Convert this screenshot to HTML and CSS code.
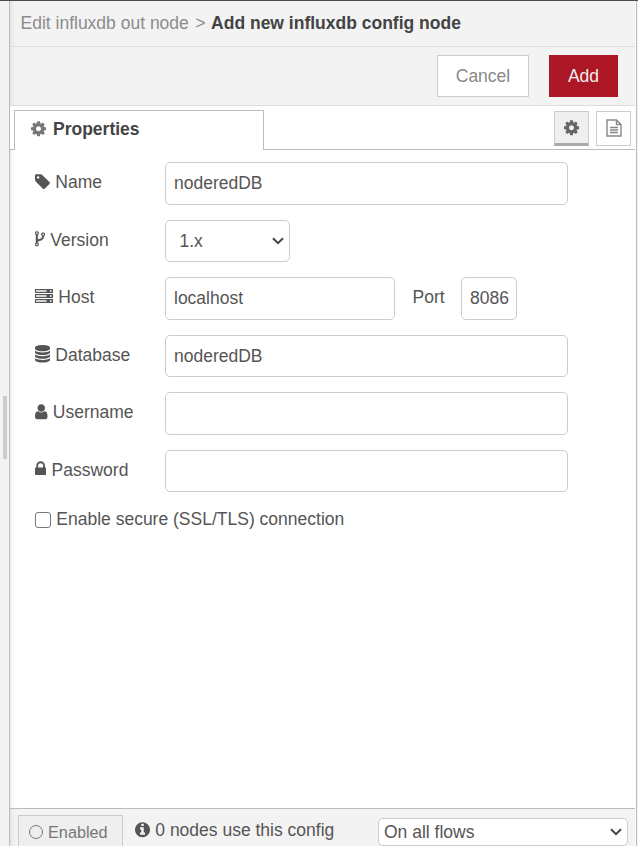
FILE: index.html
```html
<!DOCTYPE html>
<html lang="en">
<head>
<meta charset="utf-8">
<title>Add new influxdb config node</title>
<link rel="stylesheet" href="styles.css">
</head>
<body>
<div class="workspace">
  <div class="separator"><span class="grip"></span></div>
  <main class="tray">
    <header class="breadcrumb"><span>Edit influxdb out node</span><span class="crumb-arrow">&gt;</span><strong>Add new influxdb config node</strong></header>
    <div class="toolbar">
      <button class="button">Cancel</button>
      <button class="button primary">Add</button>
    </div>
    <nav class="tabs">
      <div class="tab">
        <svg class="icon" viewBox="128 0 1536 1792"><path id="cog" d="M1152 896q0-106-75-181t-181-75-181 75-75 181 75 181 181 75 181-75 75-181zm512-109v222q0 12-8 23t-20 13l-185 28q-19 54-39 91 35 50 107 138 10 12 10 25t-9 23q-27 37-99 108t-94 71q-12 0-26-9l-138-108q-44 23-91 38-16 136-29 186-7 28-36 28h-222q-14 0-24.500-8.500t-11.500-21.500l-28-184q-49-16-90-37l-141 107q-10 9-25 9-14 0-25-11-126-114-165-168-7-10-7-23 0-12 8-23 15-21 51-66.500t54-70.500q-27-50-41-99l-183-27q-13-2-21-12.500t-8-23.500v-222q0-12 8-23t19-13l186-28q14-46 39-92-40-57-107-138-10-12-10-24 0-10 9-23 26-36 98.500-107.500t94.500-71.500q13 0 26 10l138 107q44-23 91-38 16-136 29-186 7-28 36-28h222q14 0 24.500 8.500t11.500 21.500l28 184q49 16 90 37l142-107q9-9 24-9 13 0 25 10 129 119 165 170 7 8 7 22 0 12-8 23-15 21-51 66.500t-54 70.500q26 50 41 98l183 28q13 2 21 12.500t8 23.500z"/></svg>
        <span>Properties</span>
      </div>
      <div class="tab-rest">
        <button class="tool active"><svg class="icon" viewBox="128 0 1536 1792"><use href="#cog"/></svg></button>
        <button class="tool"><svg class="icon doc" viewBox="0 0 16 18"><path d="M1 1h9.500L15 5.500V17H1zM10.500 1v4.500H15M4 8.500h8M4 11h8M4 13.500h8"/></svg></button>
      </div>
    </nav>
    <form class="form">
      <div class="row">
        <label><svg class="icon" viewBox="128 0 1536 1792"><path d="M576 448q0-53-37.500-90.500t-90.500-37.500-90.500 37.500-37.500 90.500 37.500 90.500 90.500 37.500 90.500-37.500 37.500-90.500zm1067 576q0 53-37 90l-491 492q-39 37-91 37-53 0-90-37l-715-716q-38-37-64.500-101t-26.500-117v-416q0-52 38-90t90-38h416q53 0 117 26.500t102 64.500l715 714q37 39 37 91z"/></svg><span>Name</span></label>
        <div class="field">noderedDB</div>
      </div>
      <div class="row">
        <label><svg class="icon fork" viewBox="384 0 1024 1792"><path d="M672 1472q0-40-28-68t-68-28-68 28-28 68 28 68 68 28 68-28 28-68zm0-1152q0-40-28-68t-68-28-68 28-28 68 28 68 68 28 68-28 28-68zm640 128q0-40-28-68t-68-28-68 28-28 68 28 68 68 28 68-28 28-68zm96 0q0 52-26 96.500t-70 69.500q-2 287-226 414-67 38-203 81-128 40-169.500 71t-41.500 100v26q44 25 70 69.500t26 96.500q0 80-56 136t-136 56-136-56-56-136q0-52 26-96.500t70-69.500v-820q-44-25-70-69.500t-26-96.500q0-80 56-136t136-56 136 56 56 136q0 52-26 96.500t-70 69.500v497q54-26 154-57 55-17 87.500-29.500t70.500-31 59-39.500 40.500-51 28-69.500 8.500-91.500q-44-25-70-69.500t-26-96.500q0-80 56-136t136-56 136 56 56 136z"/></svg><span>Version</span></label>
        <div class="field select version"><span>1.x</span><svg class="chevron" viewBox="0 0 12 8"><path d="M1 1.200l5 5 5-5"/></svg></div>
      </div>
      <div class="row">
        <label><svg class="icon server" viewBox="0 0 18 18"><path fill-rule="evenodd" d="M0 1h18v4H0zM1 2.200v1.600h10.500V2.200zM15 2.300h1.600v1.400H15zM0 6h18v4H0zM1 7.200v1.600h10.500V7.200zM15 7.300h1.600v1.400H15zM0 11h18v4H0zM1 12.200v1.600h10.500v-1.600zM15 12.300h1.600v1.400H15z"/></svg><span>Host</span></label>
        <div class="field host">localhost</div>
        <span class="port-label">Port</span>
        <div class="field port">8086</div>
      </div>
      <div class="row">
        <label><svg class="icon" viewBox="128 0 1536 1792"><path d="M896 768q237 0 443-43t325-127v170q0 69-103 128t-280 93.500-385 34.500-385-34.500-280-93.500-103-128v-170q119 84 325 127t443 43zm0 768q237 0 443-43t325-127v170q0 69-103 128t-280 93.500-385 34.500-385-34.500-280-93.500-103-128v-170q119 84 325 127t443 43zm0-384q237 0 443-43t325-127v170q0 69-103 128t-280 93.500-385 34.500-385-34.500-280-93.500-103-128v-170q119 84 325 127t443 43zm0-1152q208 0 385 34.500t280 93.500 103 128v128q0 69-103 128t-280 93.500-385 34.500-385-34.500-280-93.500-103-128v-128q0-69 103-128t280-93.500 385-34.500z"/></svg><span>Database</span></label>
        <div class="field">noderedDB</div>
      </div>
      <div class="row">
        <label><svg class="icon user" viewBox="256 0 1280 1792"><path d="M1536 1399q0 109-62.500 187t-150.500 78h-854q-88 0-150.500-78t-62.500-187q0-85 8.500-160.500t31.500-152 58.500-131 94-89 134.500-34.500q131 128 313 128t313-128q76 0 134.500 34.500t94 89 58.500 131 31.500 152 8.500 160.500zm-256-887q0 159-112.500 271.500t-271.500 112.500-271.500-112.500-112.500-271.500 112.500-271.500 271.500-112.500 271.500 112.500 112.500 271.500z"/></svg><span>Username</span></label>
        <div class="field"></div>
      </div>
      <div class="row">
        <label><svg class="icon lock" viewBox="320 0 1152 1792"><path d="M640 768h512v-192q0-106-75-181t-181-75-181 75-75 181v192zm832 96v576q0 40-28 68t-68 28h-960q-40 0-68-28t-28-68v-576q0-40 28-68t68-28h32v-192q0-184 132-316t316-132 316 132 132 316v192h32q40 0 68 28t28 68z"/></svg><span>Password</span></label>
        <div class="field"></div>
      </div>
      <div class="check-row"><span class="checkbox"></span><span>Enable secure (SSL/TLS) connection</span></div>
    </form>
    <footer class="footer">
      <button class="enabled"><span class="ring"></span><span>Enabled</span></button>
      <div class="usage"><svg class="icon" viewBox="128 0 1536 1792"><path d="M1152 1376v-160q0-14-9-23t-23-9h-96v-512q0-14-9-23t-23-9h-320q-14 0-23 9t-9 23v160q0 14 9 23t23 9h96v320h-96q-14 0-23 9t-9 23v160q0 14 9 23t23 9h448q14 0 23-9t9-23zm-128-896v-160q0-14-9-23t-23-9h-192q-14 0-23 9t-9 23v160q0 14 9 23t23 9h192q14 0 23-9t9-23zm640 416q0 209-103 385.500t-279.500 279.500-385.500 103-385.500-103-279.500-279.500-103-385.500 103-385.500 279.500-279.500 385.500-103 385.500 103 279.500 279.500 103 385.500z"/></svg><span>0 nodes use this config</span></div>
      <div class="field select scope"><span>On all flows</span><svg class="chevron" viewBox="0 0 12 8"><path d="M1 1.200l5 5 5-5"/></svg></div>
    </footer>
  </main>
</div>
</body>
</html>
```
FILE: styles.css
```css
* { box-sizing: border-box; }

body {
  margin: 0;
  height: 846px;
  overflow: hidden;
  background: #f3f3f3;
  color: #555;
  font: 17.5px/25px "Liberation Sans", Arial, sans-serif;
}

button { font: inherit; margin: 0; }

.workspace {
  display: flex;
  height: 846px;
  border-top: 1px solid #4c4a4d;
}

.separator {
  display: flex;
  flex: none;
  align-items: center;
  width: 9px;
  padding-left: 3px;
}

.grip {
  width: 4px;
  height: 63px;
  margin-top: 8px;
  background: #ccc;
}

.tray {
  display: flex;
  flex-direction: column;
  width: 628px;
  background: #fff;
  border: solid #bbb;
  border-width: 0 1px;
  padding-right: 1px;
}

.breadcrumb {
  flex: none;
  height: 46px;
  padding: 10px 10px 0 10.5px;
  background: #f3f3f3;
  border-bottom: 1px solid #ddd;
  color: #8c8c8c;
  white-space: nowrap;
}

.crumb-arrow { margin: 0 5.5px 0 6.5px; }
.breadcrumb strong { color: #444; }

.toolbar {
  display: flex;
  flex: none;
  justify-content: flex-end;
  gap: 20px;
  height: 59px;
  padding: 8px 17px 0 0;
  background: #f3f3f3;
  border-bottom: 1px solid #ddd;
}

.breadcrumb,
.toolbar,
.footer,
.form {
  box-shadow: inset 5px 0 5px -4px rgba(0, 0, 0, 0.1);
}

.button {
  width: 92px;
  height: 42px;
  padding: 0;
  border: 1px solid #ccc;
  background: #fff;
  color: #888;
}

.button.primary {
  width: 69px;
  border-color: #ad1625;
  background: #ad1625;
  color: #eee;
}

.tabs {
  display: flex;
  flex: none;
  height: 44px;
}

.tabs::before {
  content: "";
  width: 4px;
  border-bottom: 1px solid #bbb;
}

.tab {
  display: flex;
  width: 250px;
  margin-top: 4px;
  padding: 6px 0 0 15.5px;
  gap: 7.5px;
  border: solid #bbb;
  border-width: 1px 1px 0;
  color: #444;
  font-weight: bold;
}

.tab .icon { color: #777; margin-top: 3px; }

.tab-rest {
  display: flex;
  flex: 1;
  justify-content: flex-end;
  gap: 7px;
  padding: 5px 4px 0 0;
  border-bottom: 1px solid #bbb;
}

.tool {
  display: flex;
  align-items: center;
  justify-content: center;
  width: 35px;
  height: 35px;
  padding: 0;
  border: 1px solid #ccc;
  background: #fff;
  color: #888;
}

.tool.active {
  border-bottom: 3px solid #aaa;
  background: #efefef;
  color: #666;
}

.icon {
  flex: none;
  width: 15px;
  height: 17.5px;
  fill: currentColor;
}

.icon.doc {
  width: 16px;
  height: 18px;
  margin: 0 0 1px 1px;
  fill: none;
  stroke: currentColor;
  stroke-width: 1.4;
}

.icon.fork {
  width: 10px;
  stroke: currentColor;
  stroke-width: 30;
}

.icon.server { width: 18px; height: 18px; }
.icon.user { width: 12.5px; }
.icon.lock { width: 11.25px; }

.form {
  flex: 1;
  padding: 12px 25px 0;
}

.row {
  display: flex;
  height: 42.5px;
  margin-bottom: 15px;
}

.row label {
  display: flex;
  flex: none;
  gap: 5.3px;
  width: 130px;
  padding-top: 8px;
}

.row label .icon { margin-top: 2.7px; }

.field {
  width: 403px;
  height: 100%;
  padding: 8px;
  border: 1px solid #ccc;
  border-radius: 5px;
  background: #fff;
  white-space: nowrap;
}

.select {
  display: flex;
  justify-content: space-between;
  align-items: center;
}

.chevron {
  width: 12px;
  height: 8px;
  fill: none;
  stroke: #444;
  stroke-width: 2;
}

.version { width: 125px; padding: 1px 5px 0 13.5px; }
.host { width: 230px; }

.port-label {
  width: 66px;
  padding: 8px 0 0 17.5px;
}

.port { width: 56px; }

.check-row {
  display: flex;
  gap: 5.3px;
}

.checkbox {
  width: 16px;
  height: 16px;
  margin: 5px 0 0;
  border: 1px solid #767676;
  border-radius: 3px;
}

.footer {
  display: flex;
  flex: none;
  height: 38px;
  padding-left: 8px;
  background: #f3f3f3;
  border-top: 1px solid #bbb;
}

.enabled {
  display: flex;
  align-items: center;
  gap: 5px;
  width: 105px;
  height: 36px;
  margin-top: 6px;
  padding: 0 0 2px 10px;
  border: 1px solid #ccc;
  background: #efefef;
  color: #777;
  font-size: 16.25px;
}

.ring {
  width: 14px;
  height: 14px;
  border: 1.5px solid #777;
  border-radius: 50%;
}

.usage {
  display: flex;
  gap: 5.3px;
  width: 255px;
  padding: 9px 0 0 12px;
  white-space: nowrap;
}

.usage .icon { margin-top: 3px; }

.scope {
  width: 250px;
  height: 28px;
  margin-top: 9px;
  padding: 0 5px;
}
```
